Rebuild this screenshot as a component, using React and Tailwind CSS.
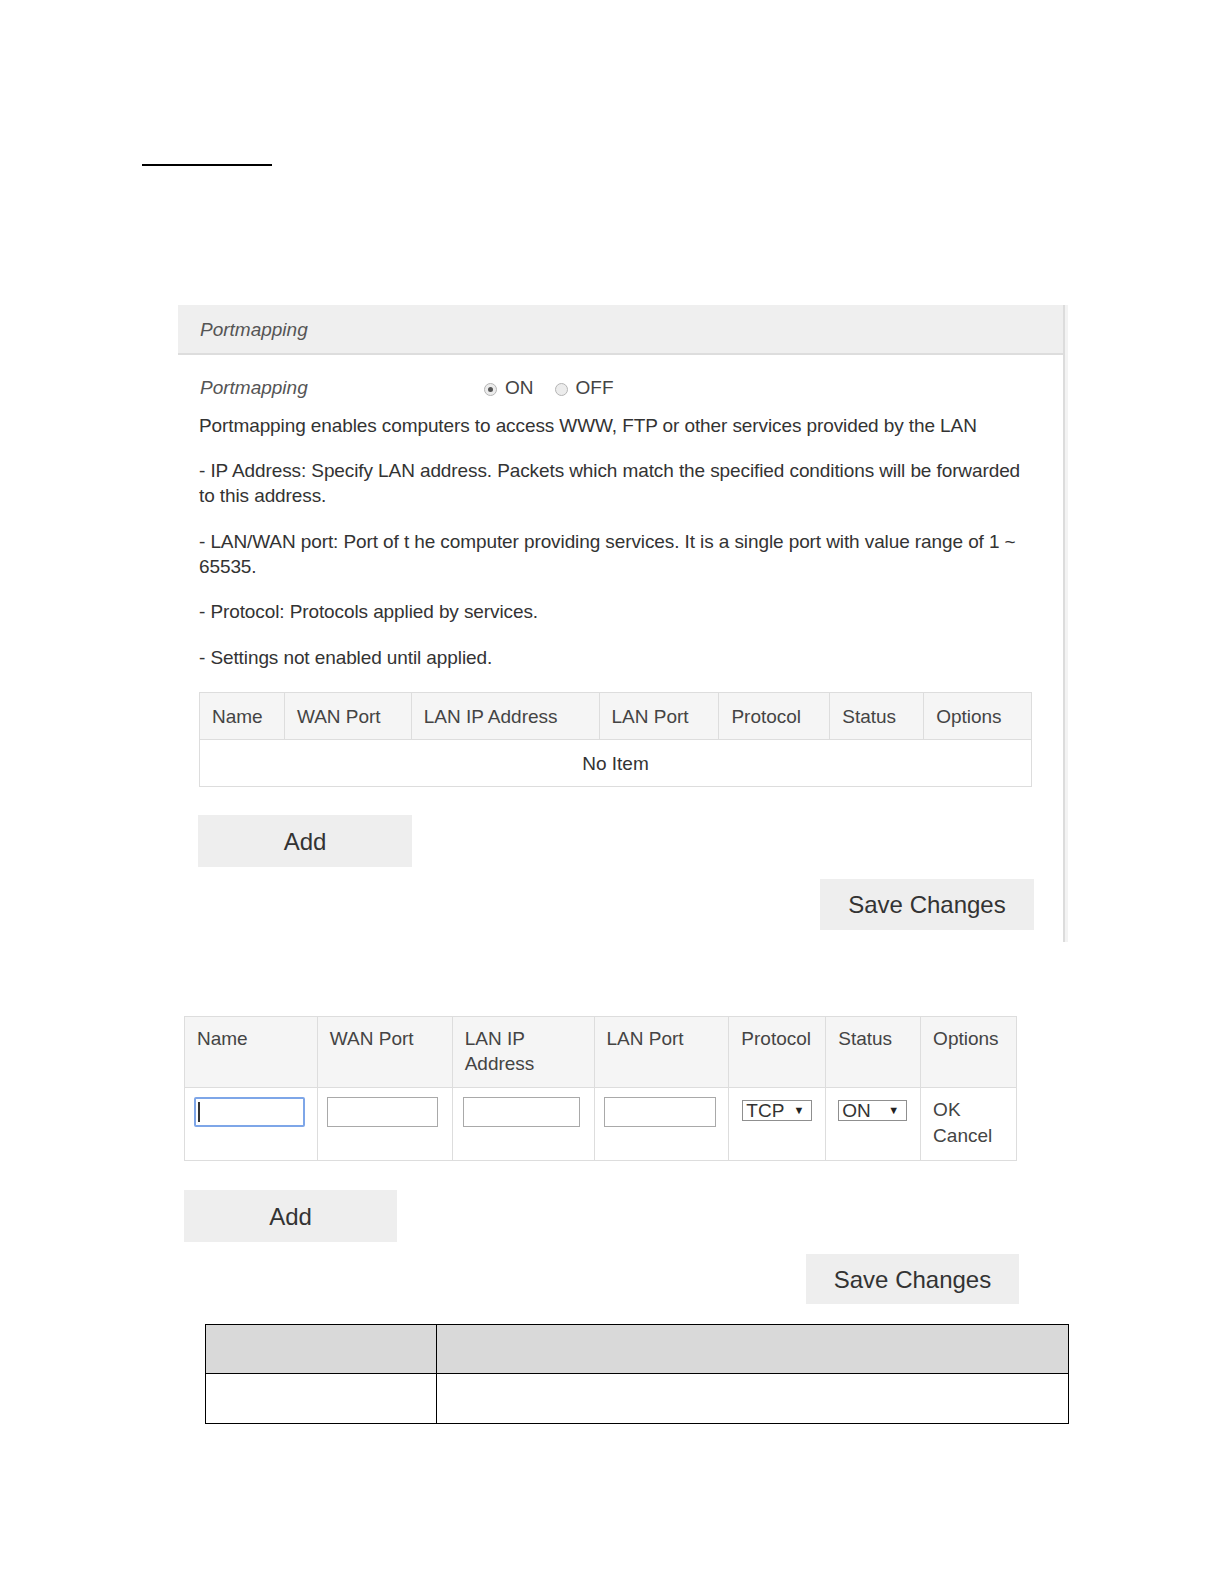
import React from "react";

const font = { fontFamily: '"Liberation Sans", Arial, sans-serif' };

function Radio({ checked }) {
  return (
    <span className="relative inline-flex w-[13px] h-[13px] rounded-full border border-[#b5b5b5] bg-[#ececec] items-center justify-center mt-[3px]">
      {checked && <span className="w-[5px] h-[5px] rounded-full bg-[#555]" />}
    </span>
  );
}

function Table1() {
  const cols = [
    ["Name", 86],
    ["WAN Port", 127],
    ["LAN IP Address", 188],
    ["LAN Port", 120],
    ["Protocol", 111],
    ["Status", 94],
    ["Options", 107],
  ];
  return (
    <div className="w-[833px] border border-[#dddddd]">
      <div className="flex h-[47px] bg-[#f5f5f5] border-b border-[#dddddd]">
        {cols.map(([t, w], i) => (
          <div
            key={t}
            style={{ width: w - (i === 0 ? 1 : 0) }}
            className={`flex items-center pl-[12px] text-[#444] ${i < cols.length - 1 ? "border-r border-[#dddddd]" : ""}`}
          >
            {t}
          </div>
        ))}
      </div>
      <div className="h-[46px] flex items-center justify-center text-[#333]">No Item</div>
    </div>
  );
}

function TextInput({ w, focused }) {
  if (focused) {
    return (
      <div
        style={{ width: w }}
        className="h-[30px] rounded-[2px] border-2 border-[#7ea6e8] bg-white flex items-center pl-[2px]"
      >
        <span className="w-[1.5px] h-[20px] bg-[#333]" />
      </div>
    );
  }
  return <div style={{ width: w }} className="h-[30px] border border-[#a9a9a9] bg-white" />;
}

function Select({ label, w }) {
  return (
    <div
      style={{ width: w }}
      className="h-[21px] border border-[#8f8f8f] bg-white flex items-center justify-between pl-[3px] pr-[7px] text-[19px] leading-none text-[#333]"
    >
      <span>{label}</span>
      <span className="text-[11px] text-[#222]">▼</span>
    </div>
  );
}

function Table2() {
  const cols = [134, 135, 142, 135, 97, 95, 95];
  const heads = ["Name", "WAN Port", ["LAN IP", "Address"], "LAN Port", "Protocol", "Status", "Options"];
  return (
    <div className="w-[833px] border border-[#dddddd]">
      <div className="flex h-[71px] bg-[#f5f5f5] border-b border-[#dddddd]">
        {heads.map((t, i) => (
          <div
            key={i}
            style={{ width: cols[i] - (i === 0 ? 1 : 0) }}
            className={`pl-[12px] pt-[9px] leading-[25px] text-[#444] ${i < cols.length - 1 ? "border-r border-[#dddddd]" : ""}`}
          >
            {Array.isArray(t) ? (
              <>
                {t[0]}
                <br />
                {t[1]}
              </>
            ) : (
              t
            )}
          </div>
        ))}
      </div>
      <div className="flex h-[72px]">
        <div style={{ width: 133 }} className="border-r border-[#dddddd] pl-[9px] pt-[9px]">
          <TextInput w={111} focused />
        </div>
        <div style={{ width: 135 }} className="border-r border-[#dddddd] pl-[9px] pt-[9px]">
          <TextInput w={111} />
        </div>
        <div style={{ width: 142 }} className="border-r border-[#dddddd] pl-[10px] pt-[9px]">
          <TextInput w={117} />
        </div>
        <div style={{ width: 135 }} className="border-r border-[#dddddd] pl-[9px] pt-[9px]">
          <TextInput w={112} />
        </div>
        <div style={{ width: 97 }} className="border-r border-[#dddddd] pl-[13px] pt-[12px]">
          <Select label="TCP" w={70} />
        </div>
        <div style={{ width: 95 }} className="border-r border-[#dddddd] pl-[12px] pt-[12px]">
          <Select label="ON" w={69} />
        </div>
        <div style={{ width: 95 }} className="pl-[12px] pt-[9px] leading-[26px] text-[#444]">
          OK
          <br />
          Cancel
        </div>
      </div>
    </div>
  );
}

function Btn({ children, w, h }) {
  return (
    <div
      style={{ width: w, height: h }}
      className="bg-[#eeeeee] flex items-center justify-center text-[24px] text-[#333]"
    >
      {children}
    </div>
  );
}

export default function App() {
  return (
    <div style={font} className="bg-white text-[19px] leading-[25px] text-[#333] pb-[100px]">
      <div className="pt-[164px] pl-[142px]">
        <div className="w-[130px] h-[2px] bg-black" />
      </div>

      {/* Panel */}
      <div className="ml-[178px] mt-[139px] flex">
        <div className="w-[885px] h-[637px]">
          <div className="h-[50px] bg-[#efefef] border-b-2 border-[#dddddd] flex items-center pl-[22px] italic text-[#555]">
            Portmapping
          </div>
          <div className="pl-[21px] pt-[20px]">
            <div className="flex items-center h-[25px]">
              <span className="italic text-[#555] w-[285px] pl-[1px]">Portmapping</span>
              <Radio checked />
              <span className="ml-[8px] text-[#444]">ON</span>
              <span className="ml-[21px] flex items-center">
                <Radio />
              </span>
              <span className="ml-[8px] text-[#444]">OFF</span>
            </div>
            <div className="tracking-[-0.1px]">
              <p className="mt-[13px]">
                Portmapping enables computers to access WWW, FTP or other services provided by the LAN
              </p>
              <p className="mt-[20px]">
                - IP Address: Specify LAN address. Packets which match the specified conditions will be forwarded
                <br />
                to this address.
              </p>
              <p className="mt-[21px]">
                - LAN/WAN port: Port of t he computer providing services. It is a single port with value range of 1 ~
                <br />
                65535.
              </p>
              <p className="mt-[20px]">- Protocol: Protocols applied by services.</p>
              <p className="mt-[21px]">- Settings not enabled until applied.</p>
            </div>
            <div className="mt-[22px]">
              <Table1 />
            </div>
            <div className="mt-[28px] -ml-[1px]">
              <Btn w={214} h={52}>Add</Btn>
            </div>
            <div className="mt-[12px] w-[835px] flex justify-end">
              <Btn w={214} h={51}>Save Changes</Btn>
            </div>
          </div>
        </div>
        <div className="w-[2px] h-[637px] bg-[#dcdcdc]" />
        <div className="w-[3px] h-[637px] bg-[#f3f3f3]" />
      </div>

      {/* Second section */}
      <div className="ml-[184px] mt-[74px] w-[835px]">
        <Table2 />
        <div className="mt-[29px]">
          <Btn w={213} h={52}>Add</Btn>
        </div>
        <div className="mt-[12px] flex justify-end">
          <Btn w={213} h={50}>Save Changes</Btn>
        </div>
      </div>

      {/* Bottom table */}
      <div className="ml-[205px] mt-[20px] w-[864px] border-[1.5px] border-black">
        <div className="flex h-[49px] bg-[#d9d9d9] border-b-[1.5px] border-black">
          <div className="w-[231px] border-r-[1.5px] border-black" />
          <div className="flex-1" />
        </div>
        <div className="flex h-[49px] bg-white">
          <div className="w-[231px] border-r-[1.5px] border-black" />
          <div className="flex-1" />
        </div>
      </div>
    </div>
  );
}
